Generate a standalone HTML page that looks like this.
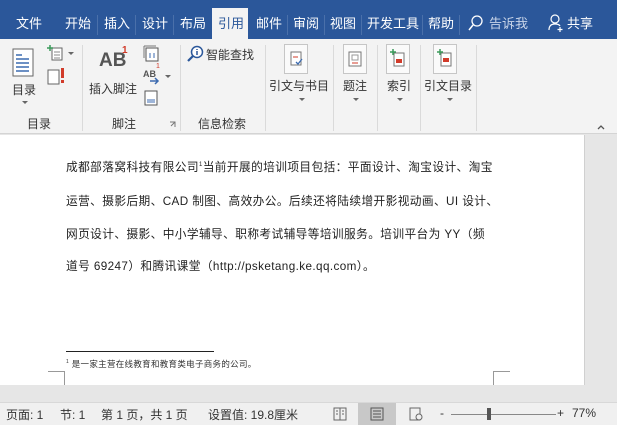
<!DOCTYPE html>
<html><head><meta charset="utf-8"><style>
*{margin:0;padding:0;box-sizing:border-box}
body{width:617px;height:425px;overflow:hidden;font-family:"Liberation Sans","Noto Sans CJK SC",sans-serif;background:#e6e6e6;position:relative;font-size:12px;color:#333}
.abs{position:absolute}
#top{left:0;top:0;width:617px;height:39px;background:#2b579a}
.tab{position:absolute;top:13px;color:#fff;font-size:13px}
.sep{position:absolute;top:15px;width:1px;height:20px;background:#4a70aa}
#rib{left:0;top:39px;width:617px;height:95px;background:#f3f3f3;border-bottom:1px solid #d4d4d4}
.gd{position:absolute;top:6px;width:1px;height:86px;background:#dadada}
.lbl{position:absolute;font-size:12px;color:#333;white-space:nowrap}
.btn{position:absolute;width:24px;height:30px;border:1px solid #c6c6c6;background:#fafafa}
.arr{position:absolute;width:0;height:0;border-left:3px solid transparent;border-right:3px solid transparent;border-top:3px solid #666}
#page{left:0;top:135px;width:584px;height:250px;background:#fff}
#sb{left:584px;top:135px;width:33px;height:250px;background:#e6e6e6;border-left:1px solid #d0d0d0}
.ln{position:absolute;left:66px;font-size:11.7px;color:#222;white-space:nowrap;letter-spacing:0.4px}
#st{left:0;top:402px;width:617px;height:23px;background:#f0f0f0;border-top:1px solid #d8d8d8}
.s{position:absolute;top:3px;font-size:12px;color:#333;white-space:nowrap}
</style></head><body>
<div id="top" class="abs">
<span class="tab" style="left:16px">文件</span>
<span class="tab" style="left:65px">开始</span><div class="sep" style="left:97px"></div>
<span class="tab" style="left:104px">插入</span><div class="sep" style="left:135px"></div>
<span class="tab" style="left:142px">设计</span><div class="sep" style="left:173px"></div>
<div class="abs" style="left:212px;top:8px;width:36px;height:31px;background:#f3f3f3"></div>
<span class="tab" style="left:180px">布局</span>
<span class="tab" style="left:218px;color:#2b579a">引用</span>
<span class="tab" style="left:256px">邮件</span><div class="sep" style="left:287px"></div>
<span class="tab" style="left:293px">审阅</span><div class="sep" style="left:324px"></div>
<span class="tab" style="left:330px">视图</span><div class="sep" style="left:361px"></div>
<span class="tab" style="left:367px">开发工具</span><div class="sep" style="left:422px"></div>
<span class="tab" style="left:428px">帮助</span><div class="sep" style="left:459px"></div>
<svg class="abs" style="left:468px;top:15px" width="16" height="16"><circle cx="9" cy="6" r="5" fill="none" stroke="#fff" stroke-width="1.3"/><line x1="5" y1="10" x2="1" y2="15" stroke="#fff" stroke-width="1.5"/></svg>
<span class="tab" style="left:489px;color:#c8d4e8">告诉我</span>
<svg class="abs" style="left:548px;top:14px" width="16" height="18"><circle cx="7" cy="5" r="4" fill="none" stroke="#fff" stroke-width="1.2"/><path d="M1 16 Q1 10 7 10 Q11 10 12 12" fill="none" stroke="#fff" stroke-width="1.2"/><path d="M12 13v5M9.5 15.5h5" stroke="#fff" stroke-width="1.2"/></svg>
<span class="tab" style="left:567px">共享</span>
</div>
<div id="rib" class="abs">
<svg class="abs" style="left:12px;top:9px" width="24" height="30"><rect x="1" y="1" width="20" height="27" fill="#fff" stroke="#666"/><path d="M4 7h6M4 11h13M4 15h13M4 19h13M4 23h13" stroke="#3c6bb0" stroke-width="1.5"/></svg>
<span class="lbl" style="left:12px;top:42px">目录</span><div class="arr" style="left:22px;top:62px"></div>
<svg class="abs" style="left:46px;top:5px" width="18" height="18"><rect x="6" y="4" width="10" height="12" fill="#fff" stroke="#666"/><path d="M1 4h6M4 1v6" stroke="#3a9a5a" stroke-width="1.5"/><path d="M8 8h6M8 11h6M8 14h6" stroke="#888"/></svg><div class="arr" style="left:68px;top:13px"></div>
<svg class="abs" style="left:47px;top:28px" width="20" height="18"><rect x="1" y="3" width="11" height="14" fill="#fff" stroke="#666"/><rect x="14" y="1" width="3" height="10" fill="#d13b2a"/><rect x="14" y="13" width="3" height="3" fill="#d13b2a"/></svg>
<span class="lbl" style="left:27px;top:76px">目录</span>
<div class="gd" style="left:82px"></div>
<span class="abs" style="left:99px;top:11px;font-size:19px;font-weight:bold;color:#555">AB</span><span class="abs" style="left:122px;top:6px;font-size:10px;color:#d13b2a;font-weight:bold">1</span>
<span class="lbl" style="left:89px;top:41px">插入脚注</span>
<svg class="abs" style="left:143px;top:5px" width="16" height="18"><rect x="3" y="4" width="12" height="13" fill="#fff" stroke="#555"/><path d="M1 2v12M1 2h12" stroke="#777"/><path d="M7 9v5M11 9v5" stroke="#3c6bb0"/></svg>
<span class="abs" style="left:143px;top:30px;font-size:9px;font-weight:bold;color:#555">AB</span><span class="abs" style="left:156px;top:24px;font-size:7px;color:#d13b2a">1</span><svg class="abs" style="left:150px;top:38px" width="10" height="8"><path d="M0 4h8M5 1l3 3-3 3" stroke="#3c6bb0" fill="none" stroke-width="1.5"/></svg><div class="arr" style="left:165px;top:36px"></div>
<svg class="abs" style="left:144px;top:51px" width="14" height="16"><rect x="1" y="1" width="12" height="14" fill="#fff" stroke="#555"/><path d="M3 10h8M3 12h8" stroke="#3c6bb0"/></svg>
<span class="lbl" style="left:112px;top:76px">脚注</span>
<svg class="abs" style="left:169px;top:82px" width="7" height="7"><path d="M1 1h5v5" fill="none" stroke="#777"/><path d="M2 5l4 -4" stroke="#777"/></svg>
<div class="gd" style="left:180px"></div>
<svg class="abs" style="left:187px;top:6px" width="18" height="18"><circle cx="10" cy="7" r="5.5" fill="#fff" stroke="#2b579a" stroke-width="1.5"/><path d="M10 4v1M10 6v4" stroke="#2b579a" stroke-width="1.5"/><path d="M6 11l-5 5" stroke="#2b579a" stroke-width="2.2"/></svg>
<span class="lbl" style="left:206px;top:7px">智能查找</span>
<span class="lbl" style="left:198px;top:76px">信息检索</span>
<div class="gd" style="left:265px"></div>
<div class="btn" style="left:284px;top:5px"><svg width="22" height="28"><rect x="6" y="7" width="10" height="13" fill="#fff" stroke="#777"/><path d="M8 12h5" stroke="#d13b2a"/><path d="M11 17l2 2 4-5" stroke="#3c6bb0" fill="none" stroke-width="1.3"/></svg></div>
<span class="lbl" style="left:269px;top:38px">引文与书目</span><div class="arr" style="left:299px;top:59px"></div>
<div class="gd" style="left:333px"></div>
<div class="btn" style="left:343px;top:5px"><svg width="22" height="28"><rect x="5" y="7" width="12" height="14" fill="#fff" stroke="#777"/><rect x="8" y="10" width="6" height="5" fill="none" stroke="#999"/><path d="M8 18h6" stroke="#d13b2a"/></svg></div>
<span class="lbl" style="left:343px;top:38px">题注</span><div class="arr" style="left:353px;top:59px"></div>
<div class="gd" style="left:377px"></div>
<div class="btn" style="left:386px;top:5px"><svg width="22" height="28"><rect x="7" y="8" width="10" height="13" fill="#fff" stroke="#777"/><path d="M3 7h6M6 4v6" stroke="#3a9a5a" stroke-width="1.5"/><rect x="9" y="14" width="6" height="4" fill="#d13b2a"/></svg></div>
<span class="lbl" style="left:387px;top:38px">索引</span><div class="arr" style="left:397px;top:59px"></div>
<div class="gd" style="left:420px"></div>
<div class="btn" style="left:433px;top:5px"><svg width="22" height="28"><rect x="7" y="8" width="10" height="13" fill="#fff" stroke="#777"/><path d="M3 7h6M6 4v6" stroke="#3a9a5a" stroke-width="1.5"/><rect x="9" y="13" width="6" height="4" fill="#d13b2a"/></svg></div>
<span class="lbl" style="left:424px;top:38px">引文目录</span><div class="arr" style="left:447px;top:59px"></div>
<div class="gd" style="left:476px"></div>
<svg class="abs" style="left:597px;top:85px" width="8" height="6"><path d="M1 5l3-3 3 3" fill="none" stroke="#555" stroke-width="1.3"/></svg>
</div>
<div id="page" class="abs">
<div class="ln" style="top:23px">成都部落窝科技有限公司<sup style="font-size:6px">1</sup>当前开展的培训项目包括：平面设计、淘宝设计、淘宝</div>
<div class="ln" style="top:57px">运营、摄影后期、CAD 制图、高效办公。后续还将陆续增开影视动画、UI 设计、</div>
<div class="ln" style="top:90px">网页设计、摄影、中小学辅导、职称考试辅导等培训服务。培训平台为 YY（频</div>
<div class="ln" style="top:122px">道号 69247）和腾讯课堂（http://psketang.ke.qq.com）。</div>
<div class="abs" style="left:66px;top:216px;width:148px;height:1px;background:#222"></div>
<div class="abs" style="left:66px;top:223px;font-size:8.5px;letter-spacing:0.3px;color:#333;white-space:nowrap"><sup style="font-size:5px">1</sup> 是一家主营在线教育和教育类电子商务的公司。</div>
<div class="abs" style="left:48px;top:236px;width:17px;height:14px;border-top:1px solid #999;border-right:1px solid #999"></div>
<div class="abs" style="left:493px;top:236px;width:17px;height:14px;border-top:1px solid #999;border-left:1px solid #999"></div>
</div>
<div id="sb" class="abs"></div>
<div id="st" class="abs">
<span class="s" style="left:6px">页面: 1</span>
<span class="s" style="left:60px">节: 1</span>
<span class="s" style="left:101px">第 1 页，共 1 页</span>
<span class="s" style="left:208px">设置值: 19.8厘米</span>
<svg class="abs" style="left:333px;top:4px" width="14" height="14"><rect x="1" y="1" width="12" height="12" fill="none" stroke="#666"/><path d="M7 1v12M3 4h2M3 7h2M9 4h2M9 7h2" stroke="#666"/></svg>
<div class="abs" style="left:358px;top:0;width:38px;height:22px;background:#c8c8c8"></div>
<svg class="abs" style="left:370px;top:4px" width="14" height="14"><rect x="1" y="1" width="12" height="12" fill="none" stroke="#555"/><path d="M3 4h8M3 7h8M3 10h8" stroke="#555"/></svg>
<svg class="abs" style="left:409px;top:4px" width="14" height="14"><rect x="1" y="1" width="10" height="12" fill="none" stroke="#666"/><circle cx="10" cy="10" r="3" fill="#f0f0f0" stroke="#666"/></svg>
<span class="s" style="left:440px">-</span>
<div class="abs" style="left:451px;top:11px;width:105px;height:1px;background:#888"></div>
<div class="abs" style="left:487px;top:5px;width:4px;height:12px;background:#555"></div>
<span class="s" style="left:557px">+</span>
<span class="s" style="left:572px">77%</span>
</div>
</body></html>
